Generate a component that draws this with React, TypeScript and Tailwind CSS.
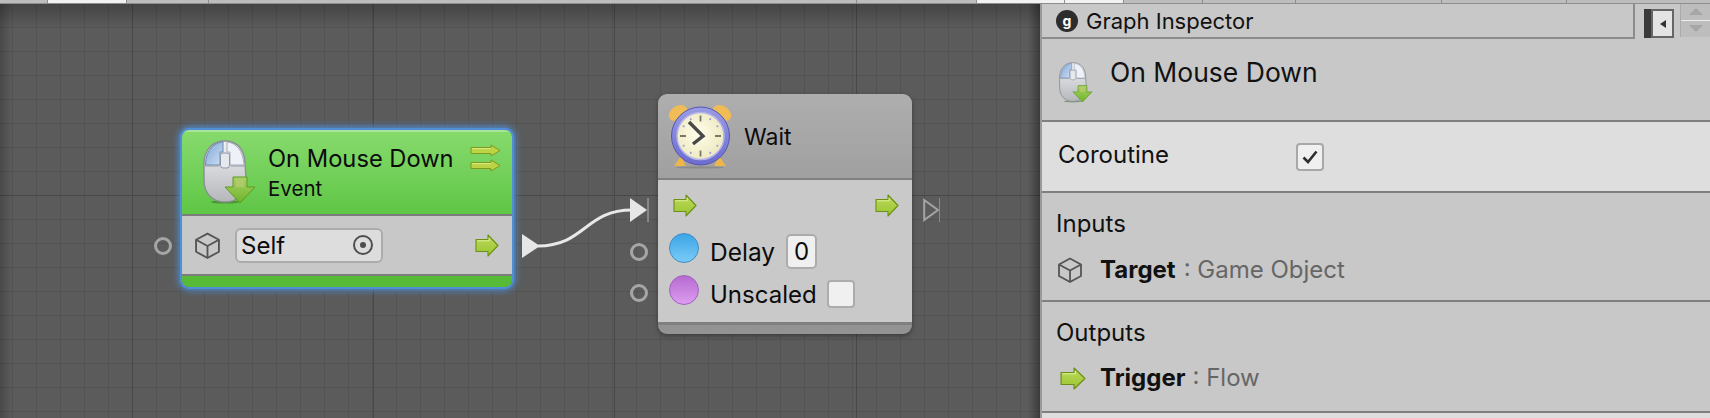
import React from "react";

const font = { fontFamily: "Inter, 'Noto Sans', sans-serif" };

function Flow({ w = 24, h = 23, id }: { w?: number; h?: number; id: string }) {
  return (
    <svg width={w} height={h} viewBox="0 0 24 23" preserveAspectRatio="none" className="shrink-0">
      <defs>
        <linearGradient id={id} x1="0" y1="0" x2="0" y2="1">
          <stop offset="0" stopColor="#bcd95a" />
          <stop offset="1" stopColor="#9ac532" />
        </linearGradient>
      </defs>
      <path d="M1 5.5H13V1L23 11.5 13 22V17.5H1Z" fill={`url(#${id})`} stroke="#6c8f17" strokeWidth="1.1" strokeLinejoin="round" />
      <path d="M2.2 6.8H14.2V4" fill="none" stroke="#dcee96" strokeWidth="1" />
    </svg>
  );
}

function ThinArrow() {
  return (
    <svg width="31" height="13" viewBox="0 0 31 13" className="block">
      <path d="M1 3.5H21V1L30 6.5L21 12V9.5H1Z" fill="#bcd344" stroke="#7f9a1f" strokeWidth="1" strokeLinejoin="round" />
      <path d="M2 4.6H21" stroke="#dbe88a" strokeWidth="1" />
    </svg>
  );
}

function Cube({ size = 26, color = "#555" }: { size?: number; color?: string }) {
  return (
    <svg width={size} height={size} viewBox="0 0 26 26" className="shrink-0" fill="none" stroke={color} strokeWidth="1.8" strokeLinejoin="round">
      <path d="M13 1.5L24 7.5V19L13 25 2 19V7.5Z" />
      <path d="M2 7.5L13 13.5 24 7.5M13 13.5V25" />
    </svg>
  );
}

function MouseIcon({ w, h, id }: { w: number; h: number; id: string }) {
  return (
    <svg width={w} height={h} viewBox="0 0 52 66" className="shrink-0">
      <defs>
        <linearGradient id={`${id}b`} x1="0" y1="0" x2="0" y2="1">
          <stop offset="0" stopColor="#f2f2f4" />
          <stop offset="1" stopColor="#b5b7bb" />
        </linearGradient>
        <linearGradient id={`${id}l`} x1="0" y1="0" x2="1" y2="1">
          <stop offset="0" stopColor="#7fa6d6" />
          <stop offset="1" stopColor="#cfe0f3" />
        </linearGradient>
        <linearGradient id={`${id}a`} x1="0" y1="0" x2="0" y2="1">
          <stop offset="0" stopColor="#a9d264" />
          <stop offset="1" stopColor="#6fb32c" />
        </linearGradient>
      </defs>
      <ellipse cx="22" cy="62" rx="14" ry="1.6" fill="#2a5a12" opacity=".45" />
      <path d="M22 1C32 1 41 7 42 22L43 40C43 54 34 62 22 62 10 62 1 54 1 40V22C2 7 12 1 22 1Z" fill={`url(#${id}b)`} stroke="#8b8f96" strokeWidth="1.4" />
      <path d="M20 2C11 3 3 9 2.5 25H17V12H20Z" fill={`url(#${id}l)`} stroke="#6d8cb5" strokeWidth="1" />
      <path d="M24 2C33 3 40 10 41 25H27V12H24Z" fill="#eef2f8" stroke="#a3adbb" strokeWidth="1" />
      <rect x="17.5" y="13" width="9" height="15" rx="2.5" fill="#e6e8ec" stroke="#8b97a8" strokeWidth="1" />
      <path d="M2 26H16M28 26H42" stroke="#9aa0a8" strokeWidth="1.2" />
      <path d="M30 37H44V47H52L37 63 22 47H30Z" fill={`url(#${id}a)`} stroke="#5e9a22" strokeWidth="1" strokeLinejoin="round" />
      <rect x="33" y="39" width="8" height="8" fill="#b5c96e" opacity=".8" />
    </svg>
  );
}

function ClockIcon() {
  const ticks = Array.from({ length: 12 }, (_, i) => (i * Math.PI) / 6);
  return (
    <svg width="64" height="65" viewBox="0 0 64 65" className="shrink-0">
      <defs>
        <radialGradient id="face" cx=".45" cy=".45" r=".6">
          <stop offset="0" stopColor="#fffdea" />
          <stop offset="1" stopColor="#ece8bf" />
        </radialGradient>
        <linearGradient id="ring" x1="0" y1="0" x2="0" y2="1">
          <stop offset="0" stopColor="#9a9ce4" />
          <stop offset="1" stopColor="#6c6ccf" />
        </linearGradient>
      </defs>
      <ellipse cx="10" cy="9" rx="10" ry="7" transform="rotate(-35 10 9)" fill="#f0bc55" />
      <ellipse cx="54" cy="9" rx="10" ry="7" transform="rotate(35 54 9)" fill="#f0bc55" />
      <path d="M13 52L6 62H18ZM51 52L58 62H46Z" fill="#eeb54a" />
      <ellipse cx="32" cy="63.5" rx="24" ry="1" fill="#555" opacity=".3" />
      <circle cx="32.5" cy="32" r="29" fill="url(#ring)" stroke="#5656ae" strokeWidth="1" />
      <circle cx="32.5" cy="32" r="23.5" fill="url(#face)" stroke="#b4b4ea" strokeWidth="1.5" />
      {ticks.map((t, i) => (
        <line
          key={i}
          x1={32.5 + Math.sin(t) * 20.5}
          y1={32 - Math.cos(t) * 20.5}
          x2={32.5 + Math.sin(t) * (i % 3 === 0 ? 14.5 : 18.5)}
          y2={32 - Math.cos(t) * (i % 3 === 0 ? 14.5 : 18.5)}
          stroke={i % 3 === 0 ? "#77776a" : "#a2a2d6"}
          strokeWidth="1.8"
        />
      ))}
      <path d="M21 18L35 32 25 40" fill="none" stroke="#484848" strokeWidth="3.4" strokeLinejoin="miter" />
    </svg>
  );
}

function PortHollow() {
  return <div className="h-[18px] w-[18px] rounded-full border-[3px] border-[#a6a6a6]" />;
}

function Canvas() {
  return (
    <div className="relative h-full w-[1040px] shrink-0 overflow-hidden bg-[#5b5b5b]">
      <svg className="absolute inset-0" width="1040" height="414">
        <defs>
          <pattern id="minor" x="12" y="23" width="24" height="24" patternUnits="userSpaceOnUse">
            <path d="M0.5 0V24M0 0.5H24" stroke="#535353" strokeWidth="1" fill="none" />
          </pattern>
          <linearGradient id="top" x1="0" y1="0" x2="0" y2="1">
            <stop offset="0" stopColor="#000" stopOpacity=".25" />
            <stop offset="1" stopColor="#000" stopOpacity="0" />
          </linearGradient>
          <linearGradient id="left" x1="0" y1="0" x2="1" y2="0">
            <stop offset="0" stopColor="#000" stopOpacity=".2" />
            <stop offset="1" stopColor="#000" stopOpacity="0" />
          </linearGradient>
          <linearGradient id="right" x1="0" y1="0" x2="1" y2="0">
            <stop offset="0" stopColor="#000" stopOpacity="0" />
            <stop offset="1" stopColor="#000" stopOpacity=".35" />
          </linearGradient>
        </defs>
        <rect width="1040" height="414" fill="url(#minor)" />
        {[132, 373, 614, 856].map((x) => (
          <line key={x} x1={x + 0.5} x2={x + 0.5} y1="0" y2="414" stroke="#484848" />
        ))}
        <line x1="0" x2="1040" y1="191.5" y2="191.5" stroke="#484848" />
        <rect width="1040" height="24" fill="url(#top)" />
        <rect width="12" height="414" fill="url(#left)" />
        <rect x="1028" width="12" height="414" fill="url(#right)" />
        <path d="M538 242C585 242 585 206 632 206" fill="none" stroke="#e8e8e8" strokeWidth="3" />
      </svg>

      {/* Ports around the nodes */}
      <div className="absolute left-[154px] top-[233px]"><PortHollow /></div>
      <div className="absolute left-[630px] top-[239px]"><PortHollow /></div>
      <div className="absolute left-[630px] top-[280px]"><PortHollow /></div>
      <svg className="absolute left-[522px] top-[230px]" width="20" height="24" viewBox="0 0 20 24">
        <path d="M0 0L18 12 0 24Z" fill="#e6e6e6" />
      </svg>
      <svg className="absolute left-[630px] top-[194px]" width="19" height="24" viewBox="0 0 19 24">
        <path d="M0 0L17 12 0 24Z" fill="#e6e6e6" />
        <path d="M18 0V24" stroke="#b5b5b5" strokeWidth="1" />
      </svg>
      <svg className="absolute left-[923px] top-[194px]" width="18" height="24" viewBox="0 0 18 24">
        <path d="M1.2 2L15 12 1.2 22Z" fill="none" stroke="#a4a4a4" strokeWidth="2" />
        <path d="M16.5 0V24" stroke="#8a8a8a" strokeWidth="1" />
      </svg>

      {/* On Mouse Down */}
      <div className="absolute left-[182px] top-[126px] flex h-[157px] w-[330px] flex-col overflow-hidden rounded-[7px] text-[#0c0c0c] shadow-[0_0_0_2px_#4f8fd8,0_0_7px_3px_#4d93e0]">
        <div className="flex h-[84px] items-start border-t-2 border-t-[#a8e59a] bg-gradient-to-b from-[#86da6c] to-[#5fc646] pl-[21px] pt-[8px]">
          <MouseIcon w={52} h={66} id="m1" />
          <div className="ml-[13px] mt-[5px] flex flex-col">
            <span className="text-[23.7px] leading-[28px]">On Mouse Down</span>
            <span className="mt-[5px] text-[20.5px] leading-[22px]">Event</span>
          </div>
          <div className="ml-auto mr-[11px] mt-[4px] flex flex-col gap-[2px]">
            <ThinArrow />
            <ThinArrow />
          </div>
        </div>
        <div className="flex h-[62px] items-center border-y-2 border-[#7d7d7d] bg-[#c8c8c8] pl-[12px] pr-[13px]">
          <Cube size={27} />
          <div className="ml-[14px] flex h-[35px] w-[148px] items-center rounded-[6px] border-2 border-[#acacac] bg-[#dddddd] pl-[4px] pr-[8px]">
            <span className="mt-[1px] text-[24px] leading-none">Self</span>
            <span className="ml-auto flex h-[20px] w-[20px] items-center justify-center rounded-full border-2 border-[#4e4e4e]">
              <span className="h-[6px] w-[6px] rounded-full bg-[#4e4e4e]" />
            </span>
          </div>
          <div className="ml-auto"><Flow id="f1" /></div>
        </div>
        <div className="flex-1 bg-[#58bb38]" />
      </div>

      {/* Wait */}
      <div className="absolute left-[658px] top-[90px] flex h-[240px] w-[254px] flex-col overflow-hidden rounded-[9px] text-[#0c0c0c] shadow-[0_2px_5px_rgba(0,0,0,0.35)]">
        <div className="flex h-[86px] items-center border-b-2 border-[#808080] bg-gradient-to-b from-[#aeaeae] to-[#a0a0a0] pl-[10px]">
          <ClockIcon />
          <span className="ml-[12px] mt-[2px] text-[23px] leading-none">Wait</span>
        </div>
        <div className="flex flex-1 flex-col bg-[#c9c9c9] pl-[11px] pr-[13px]">
          <div className="mt-[14px] flex items-center justify-between pl-[4px]">
            <Flow id="f2" />
            <Flow id="f3" />
          </div>
          <div className="mt-[17px] flex h-[35px] items-center">
            <span className="mb-[7px] h-[30px] w-[30px] rounded-full border border-[#3f8cc4] bg-gradient-to-b from-[#39a5e6] to-[#79cbf8]" />
            <span className="ml-[11px] mt-[2px] text-[24.5px] leading-none">Delay</span>
            <span className="ml-[11px] flex h-[35px] w-[31px] items-center justify-center rounded-[5px] border-2 border-[#acacac] bg-[#f0f0f0] text-[24px] leading-none">0</span>
          </div>
          <div className="mt-[7px] flex h-[35px] items-center">
            <span className="mb-[7px] h-[30px] w-[30px] rounded-full border border-[#a35fc0] bg-gradient-to-b from-[#b56bd0] to-[#dd9cf0]" />
            <span className="ml-[11px] mt-[2px] text-[24px] leading-none">Unscaled</span>
            <span className="ml-[10px] h-[28px] w-[28px] rounded-[4px] border-2 border-[#acacac] bg-[#f0f0f0]" />
          </div>
        </div>
        <div className="h-[12px] border-t-[3px] border-[#808080] bg-[#939393]" />
      </div>
    </div>
  );
}

function Section({ title, children, h }: { title: string; children: React.ReactNode; h: string }) {
  return (
    <div className={`flex flex-col border-b-2 border-[#7f7f7f] pl-[14px] ${h}`}>
      <span className="text-[24px] leading-[28px]">{title}</span>
      {children}
    </div>
  );
}

export default function App() {
  return (
    <div className="flex h-[418px] w-[1710px] flex-col overflow-hidden bg-[#c8c8c8]" style={font}>
      <div className="flex h-[4px] shrink-0 border-b border-[#8e8e8e] bg-[#bdbdbd]">
        <div className="w-[47px]" />
        <div className="w-[80px] border-x border-[#8e8e8e] bg-[#f2f2f2]" />
        <div className="w-[82px] border-r border-[#8e8e8e]" />
        <div className="w-[648px] border-r border-[#8e8e8e]" />
        <div className="w-[120px] border-r border-[#8e8e8e]" />
        <div className="w-[88px] border-r border-[#8e8e8e] bg-[#f2f2f2]" />
        <div className="w-[59px] border-r border-[#8e8e8e] bg-[#f2f2f2]" />
        <div className="w-[79px] border-r border-[#8e8e8e]" />
        <div className="w-[93px] border-r border-[#8e8e8e]" />
        <div className="w-[146px] border-r border-[#8e8e8e]" />
        <div className="w-[125px] border-r border-[#8e8e8e]" />
      </div>
      <div className="flex min-h-0 flex-1">
        <Canvas />
        <div className="w-[2px] shrink-0 bg-[#9a9a9a]" />
        <div className="flex min-w-0 flex-1 flex-col text-[#111]">
          <div className="flex h-[35px] shrink-0">
            <div className="flex w-[593px] items-center border-b-2 border-r-2 border-[#8c8c8c] pl-[14px]">
              <span className="flex h-[22px] w-[22px] items-center justify-center rounded-full bg-[#2d2d2d] text-[14px] font-bold leading-none text-white">g</span>
              <span className="ml-[8px] text-[22px] leading-none">Graph Inspector</span>
            </div>
            <div className="flex flex-1 border-b-2 border-transparent pl-[9px]">
              <div className="mt-[5px] flex h-[29px] w-[30px] items-center justify-center border-l-[7px] border-[#3a3a3a] bg-[#e4e4e4] shadow-[inset_0_0_0_2px_#666] blur-[0.6px]">
                <span className="h-0 w-0 border-y-[4px] border-r-[6px] border-y-transparent border-r-[#333]" />
              </div>
              <div className="ml-[6px] flex flex-1 flex-col border-l border-[#aaa]">
                <div className="flex h-[17px] items-center justify-center border-b border-[#eee] bg-[#bdbdbd]">
                  <span className="h-0 w-0 border-x-[7px] border-b-[7px] border-x-transparent border-b-[#a6a6a6]" />
                </div>
                <div className="flex h-[17px] items-center justify-center bg-[#bdbdbd]">
                  <span className="h-0 w-0 border-x-[7px] border-t-[7px] border-x-transparent border-t-[#a6a6a6]" />
                </div>
              </div>
            </div>
          </div>
          <div className="flex h-[83px] shrink-0 items-start border-b-2 border-[#7f7f7f] pl-[17px] pt-[23px]">
            <MouseIcon w={33} h={42} id="m2" />
            <span className="ml-[18px] mt-[-5px] text-[26.5px] leading-[30px]">On Mouse Down</span>
          </div>
          <div className="flex h-[71px] shrink-0 items-center border-b-2 border-[#7f7f7f] bg-[#dedede] pl-[16px]">
            <span className="mb-[4px] w-[238px] text-[24px] leading-none">Coroutine</span>
            <span className="flex h-[28px] w-[28px] items-center justify-center rounded-[4px] border-2 border-[#a8a8a8] bg-[#f0f0f0]">
              <svg width="16" height="14" viewBox="0 0 16 14" fill="none" stroke="#2f2f2f" strokeWidth="2.6">
                <path d="M1.5 7.5L6 12 14.5 1.5" />
              </svg>
            </span>
          </div>
          <Section title="Inputs" h="h-[109px] pt-[17px]">
            <div className="ml-[1px] mt-[19px] flex items-center">
              <Cube size={26} />
              <span className="ml-[17px] text-[24px] font-bold leading-none">Target</span>
              <span className="ml-[8px] text-[24px] leading-none text-[#666]">: Game Object</span>
            </div>
          </Section>
          <Section title="Outputs" h="h-[111px] pt-[17px]">
            <div className="mt-[19px] flex items-center">
              <span className="ml-[4px]"><Flow id="f4" w={26} h={23} /></span>
              <span className="ml-[14px] text-[24px] font-bold leading-none">Trigger</span>
              <span className="ml-[7px] text-[24px] leading-none text-[#666]">: Flow</span>
            </div>
          </Section>
          <div className="flex-1 bg-[#dedede]" />
        </div>
      </div>
    </div>
  );
}
